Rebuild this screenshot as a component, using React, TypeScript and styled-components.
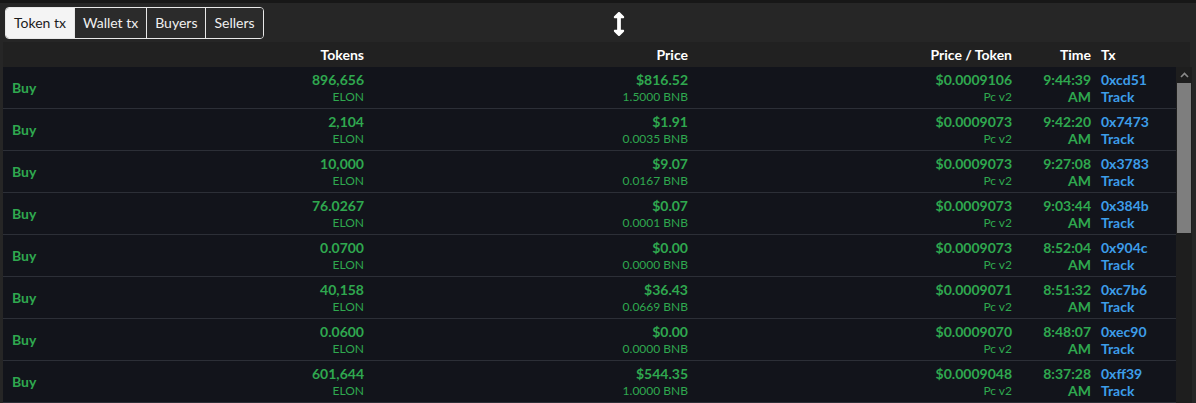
import React from "react";
import styled, { createGlobalStyle } from "styled-components";
import { FaArrowsAltV } from "react-icons/fa";

const Global = createGlobalStyle`
  html, body { margin: 0; padding: 0; background: #262626; overflow: hidden; }
  body { font-family: Lato, "Open Sans", sans-serif; }
`;

const Page = styled.div`
  width: 1196px;
  height: 403px;
  background: #262626;
  display: flex;
  flex-direction: column;
  border-top: 3px solid #171717;
  box-sizing: border-box;
  overflow: hidden;
`;

const Toolbar = styled.div`
  display: grid;
  grid-template-columns: 1fr auto 1fr;
  align-items: center;
  padding: 3px 5px 0 5px;
  height: 36px;
  box-sizing: border-box;
`;

const Tabs = styled.div`
  display: flex;
  border: 1px solid #e8e8e8;
  border-radius: 4px;
  overflow: hidden;
  justify-self: start;
`;

const Tab = styled.button<{ $active?: boolean }>`
  font-family: Lato, sans-serif;
  font-size: 14px;
  height: 30px;
  padding: 0 8px;
  border: none;
  border-left: ${(p) => (p.$active ? "none" : "1px solid #e8e8e8")};
  background: ${(p) => (p.$active ? "#f4f4f4" : "#2b2b2b")};
  color: ${(p) => (p.$active ? "#1c1c1c" : "#f0f0f0")};
  cursor: pointer;
`;

const Resize = styled.div`
  color: #ffffff;
  display: flex;
  align-items: center;
  justify-content: center;
  padding-top: 2px;
  padding-left: 42px;
`;

const TableArea = styled.div`
  margin-top: 3px;
  display: flex;
  flex-direction: column;
  flex: 1;
  min-height: 0;
`;

const cols = "100px 261px 324px 324px 79px 1fr";

const HeaderRow = styled.div`
  display: grid;
  grid-template-columns: ${cols};
  margin-left: 3px;
  margin-right: 6px;
  height: 25px;
  align-items: center;
  background: #212121;
  color: #ffffff;
  font-weight: 700;
  font-size: 14px;
`;

const HCell = styled.div<{ $left?: boolean }>`
  text-align: ${(p) => (p.$left ? "left" : "right")};
  padding-left: ${(p) => (p.$left ? "10px" : "0")};
`;

const BodyWrap = styled.div`
  display: flex;
  margin-left: 3px;
  margin-right: 4px;
  flex: 1;
  min-height: 0;
`;

const Rows = styled.div`
  flex: 1;
  display: flex;
  flex-direction: column;
`;

const Row = styled.div`
  display: grid;
  grid-template-columns: ${cols};
  height: 42px;
  box-sizing: border-box;
  background: #12141b;
  border-bottom: 1px solid #2c2f37;
  align-items: center;
  flex-shrink: 0;
`;

const TypeCell = styled.div`
  padding-left: 9px;
  color: #2fa84f;
  font-weight: 700;
  font-size: 14px;
`;

const Stack = styled.div<{ $left?: boolean; $blue?: boolean }>`
  display: flex;
  flex-direction: column;
  align-items: ${(p) => (p.$left ? "flex-start" : "flex-end")};
  padding-left: ${(p) => (p.$left ? "10px" : "0")};
  color: ${(p) => (p.$blue ? "#3d9de9" : "#2fa84f")};
  line-height: 17px;
`;

const Main = styled.span`
  font-size: 14px;
  font-weight: 700;
`;

const Sub = styled.span<{ $bold?: boolean }>`
  font-size: ${(p) => (p.$bold ? "14px" : "12px")};
  font-weight: ${(p) => (p.$bold ? 700 : 400)};
`;

const Scrollbar = styled.div`
  width: 16px;
  display: flex;
  flex-direction: column;
  background: #1e1e1e;
`;

const ScrollUp = styled.div`
  height: 16px;
  display: flex;
  align-items: center;
  justify-content: center;
  background: #1e1e1e;
`;

const Thumb = styled.div`
  height: 150px;
  margin: 0 1px;
  background: #7e7e7e;
`;

type Tx = {
  tokens: string;
  usd: string;
  bnb: string;
  ppt: string;
  time: string;
  hash: string;
};

const data: Tx[] = [
  { tokens: "896,656", usd: "$816.52", bnb: "1.5000 BNB", ppt: "$0.0009106", time: "9:44:39", hash: "0xcd51" },
  { tokens: "2,104", usd: "$1.91", bnb: "0.0035 BNB", ppt: "$0.0009073", time: "9:42:20", hash: "0x7473" },
  { tokens: "10,000", usd: "$9.07", bnb: "0.0167 BNB", ppt: "$0.0009073", time: "9:27:08", hash: "0x3783" },
  { tokens: "76.0267", usd: "$0.07", bnb: "0.0001 BNB", ppt: "$0.0009073", time: "9:03:44", hash: "0x384b" },
  { tokens: "0.0700", usd: "$0.00", bnb: "0.0000 BNB", ppt: "$0.0009073", time: "8:52:04", hash: "0x904c" },
  { tokens: "40,158", usd: "$36.43", bnb: "0.0669 BNB", ppt: "$0.0009071", time: "8:51:32", hash: "0xc7b6" },
  { tokens: "0.0600", usd: "$0.00", bnb: "0.0000 BNB", ppt: "$0.0009070", time: "8:48:07", hash: "0xec90" },
  { tokens: "601,644", usd: "$544.35", bnb: "1.0000 BNB", ppt: "$0.0009048", time: "8:37:28", hash: "0xff39" },
];

export default function App() {
  return (
    <Page>
      <Global />
      <Toolbar>
        <Tabs>
          <Tab $active>Token tx</Tab>
          <Tab>Wallet tx</Tab>
          <Tab>Buyers</Tab>
          <Tab>Sellers</Tab>
        </Tabs>
        <Resize>
          <FaArrowsAltV size={24} />
        </Resize>
        <div />
      </Toolbar>
      <TableArea>
        <HeaderRow>
          <HCell />
          <HCell>Tokens</HCell>
          <HCell>Price</HCell>
          <HCell>Price / Token</HCell>
          <HCell>Time</HCell>
          <HCell $left>Tx</HCell>
        </HeaderRow>
        <BodyWrap>
          <Rows>
            {data.map((d) => (
              <Row key={d.hash}>
                <TypeCell>Buy</TypeCell>
                <Stack>
                  <Main>{d.tokens}</Main>
                  <Sub>ELON</Sub>
                </Stack>
                <Stack>
                  <Main>{d.usd}</Main>
                  <Sub>{d.bnb}</Sub>
                </Stack>
                <Stack>
                  <Main>{d.ppt}</Main>
                  <Sub>Pc v2</Sub>
                </Stack>
                <Stack>
                  <Main>{d.time}</Main>
                  <Sub $bold>AM</Sub>
                </Stack>
                <Stack $left $blue>
                  <Main>{d.hash}</Main>
                  <Sub $bold>Track</Sub>
                </Stack>
              </Row>
            ))}
          </Rows>
          <Scrollbar>
            <ScrollUp>
              <svg width="9" height="6" viewBox="0 0 9 6">
                <path d="M1 5 L4.5 1.5 L8 5" stroke="#8a8a8a" strokeWidth="1.6" fill="none" />
              </svg>
            </ScrollUp>
            <Thumb />
          </Scrollbar>
        </BodyWrap>
      </TableArea>
    </Page>
  );
}
